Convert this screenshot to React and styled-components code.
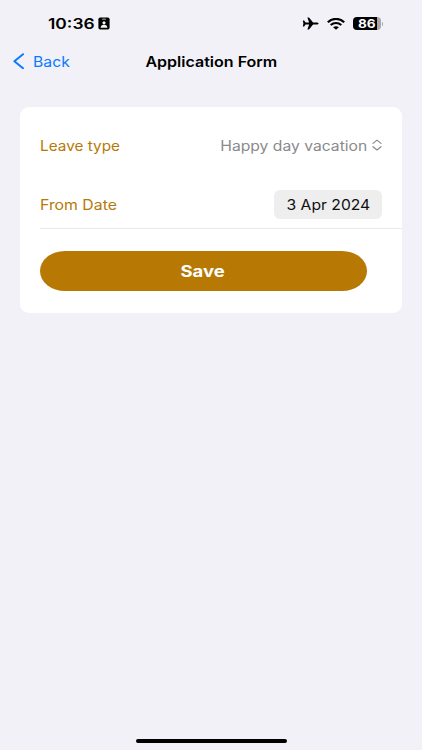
import styled, { createGlobalStyle } from 'styled-components';

const App = () => {
  return (
    <Screen>
      <GlobalStyle />
      <StatusBar>
        <Clock>
          <Label $size={14.5} $weight={600} $stretch={1.2}>
            10:36
          </Label>
          <ContactIcon />
        </Clock>
        <Indicators>
          <PlaneIcon />
          <WifiIcon />
          <Battery>
            <BatteryBody>
              <Label $size={12} $weight={700} $stretch={1.13} $origin="center">
                86
              </Label>
            </BatteryBody>
            <BatteryCap />
          </Battery>
        </Indicators>
      </StatusBar>

      <NavBar>
        <BackButton>
          <BackIcon />
          <Label $size={14.2} $stretch={1.11}>
            Back
          </Label>
        </BackButton>
        <Title>
          <Label $size={14.2} $weight={600} $stretch={1.13} $origin="center">
            Application Form
          </Label>
        </Title>
      </NavBar>

      <Card>
        <Row>
          <Label $size={14} $color="#b77906" $stretch={1.095}>
            Leave type
          </Label>
          <Picker>
            <Label $size={14} $color="#8a8a8c" $stretch={1.12} $origin="right">
              Happy day vacation
            </Label>
            <UpDownIcon />
          </Picker>
        </Row>
        <DateRow>
          <Label $size={14} $color="#b77906" $stretch={1.13}>
            From Date
          </Label>
          <DateButton>
            <Label $size={14} $stretch={1.12} $origin="center">
              3 Apr 2024
            </Label>
          </DateButton>
        </DateRow>
        <SaveButton>
          <Label $size={15.5} $weight={700} $stretch={1.19} $origin="center">
            Save
          </Label>
        </SaveButton>
      </Card>

      <HomeIndicator />
    </Screen>
  );
};

const ContactIcon = () => (
  <svg width="12" height="13" viewBox="0 0 12 13">
    <rect x="0.4" y="0.4" width="11.2" height="12.2" rx="1.8" fill="#000" />
    <rect x="4" y="1.7" width="4" height="0.9" rx="0.4" fill="#f2f1f7" />
    <circle cx="6" cy="5.8" r="1.6" fill="#f2f1f7" />
    <path d="M2.7 10.7c0-2 1.2-2.9 3.3-2.9s3.3.9 3.3 2.9z" fill="#f2f1f7" />
  </svg>
);

const PlaneIcon = () => (
  <svg width="17" height="13" viewBox="0 0 17 13">
    <path
      d="M16.6 6.5c0 .7-1 1.1-2.2 1.1h-3.3L7 12.5H5.4l1.7-4.9H3.6L2.1 9.5H.8l.6-3L.8 3.5h1.3l1.500 1.900h3.500L5.400.5H7l4.100 4.900h3.300c1.200 0 2.200.4 2.200 1.100z"
      fill="#000"
    />
  </svg>
);

const WifiIcon = () => (
  <svg width="18" height="12" viewBox="0 0 18 12">
    <path d="M.8 4.200C5.400-.2 12.600-.2 17.200 4.200" fill="none" stroke="#000" strokeWidth="2.200" />
    <path d="M3.700 7.100C6.800 4.200 11.200 4.200 14.300 7.100" fill="none" stroke="#000" strokeWidth="2.100" />
    <path d="M6.100 9.200c1.700-1.400 4.100-1.400 5.800 0L9 11.700z" fill="#000" />
  </svg>
);

const BackIcon = () => (
  <svg width="12" height="16" viewBox="0 0 12 16">
    <path
      d="M10 1.200L1.400 8.200l8.600 7"
      fill="none"
      stroke="#0a7aff"
      strokeWidth="2"
      strokeLinecap="round"
      strokeLinejoin="round"
    />
  </svg>
);

const UpDownIcon = () => (
  <svg width="10" height="12" viewBox="0 0 10 12">
    <path
      d="M1 4.400L5 1.100l4 3.300M1 7.700L5 11l4-3.300"
      fill="none"
      stroke="#8a8a8c"
      strokeWidth="1.200"
      strokeLinecap="round"
      strokeLinejoin="round"
    />
  </svg>
);

const GlobalStyle = createGlobalStyle`
  body {
    margin: 0;
    background: #f2f1f7;
    font-family: Inter, 'Liberation Sans', sans-serif;
  }
  * {
    box-sizing: border-box;
  }
  svg {
    display: block;
    flex-shrink: 0;
  }
`;

const Screen = styled.div`
  height: 750px;
  display: flex;
  flex-direction: column;
  background: #f2f1f7;
  overflow: hidden;
`;

const Label = styled.span`
  display: block;
  padding-top: 1px;
  color: ${(props) => props.$color || 'inherit'};
  font-size: ${(props) => props.$size}px;
  font-weight: ${(props) => props.$weight || 400};
  line-height: 20px;
  white-space: nowrap;
  transform: scaleX(${(props) => props.$stretch});
  transform-origin: ${(props) => props.$origin || 'left'};
`;

const StatusBar = styled.div`
  height: 47px;
  display: flex;
  justify-content: space-between;
  align-items: center;
  padding: 0 39px 0 48px;
`;

const Clock = styled.div`
  width: 62px;
  display: flex;
  justify-content: space-between;
  align-items: center;
`;

const Indicators = styled.div`
  display: flex;
  align-items: center;
  gap: 8px;
`;

const Battery = styled.div`
  display: flex;
  align-items: center;
  gap: 1px;
`;

const BatteryBody = styled.div`
  width: 28px;
  height: 13px;
  display: flex;
  justify-content: center;
  align-items: center;
  border-radius: 4px;
  background: linear-gradient(to right, #000 86%, #a9a8ad 86%);
  color: #fff;
`;

const BatteryCap = styled.div`
  width: 1.5px;
  height: 4px;
  border-radius: 0 2px 2px 0;
  background: #a9a8ad;
`;

const NavBar = styled.div`
  height: 28px;
  display: grid;
  grid-template-columns: 1fr auto 1fr;
  align-items: center;
  padding: 0 13px;
`;

const BackButton = styled.div`
  display: flex;
  align-items: center;
  gap: 7.5px;
  color: #0a7aff;
`;

const Title = styled.div`
  color: #000;
`;

const Card = styled.div`
  height: 206px;
  margin: 32px 20px 0;
  padding-left: 20px;
  border-radius: 9px;
  background: #fff;
`;

const Row = styled.div`
  height: 76px;
  display: flex;
  justify-content: space-between;
  align-items: center;
  padding-right: 20px;
`;

const DateRow = styled(Row)`
  height: 46px;
  padding-bottom: 3px;
  border-bottom: 1px solid #e9e9eb;
`;

const Picker = styled.div`
  display: flex;
  align-items: center;
  gap: 5px;
`;

const DateButton = styled.div`
  width: 108px;
  height: 29px;
  display: flex;
  justify-content: center;
  align-items: center;
  border-radius: 6px;
  background: #eeeeef;
  color: #111;
`;

const SaveButton = styled.div`
  width: 327px;
  height: 40px;
  margin-top: 22px;
  padding-right: 1px;
  display: flex;
  justify-content: center;
  align-items: center;
  border-radius: 25px / 20px;
  background: #b77903;
  color: #fff;
`;

const HomeIndicator = styled.div`
  width: 151px;
  height: 4px;
  margin: auto auto 7px;
  border-radius: 2px;
  background: #000;
`;

export default App;
